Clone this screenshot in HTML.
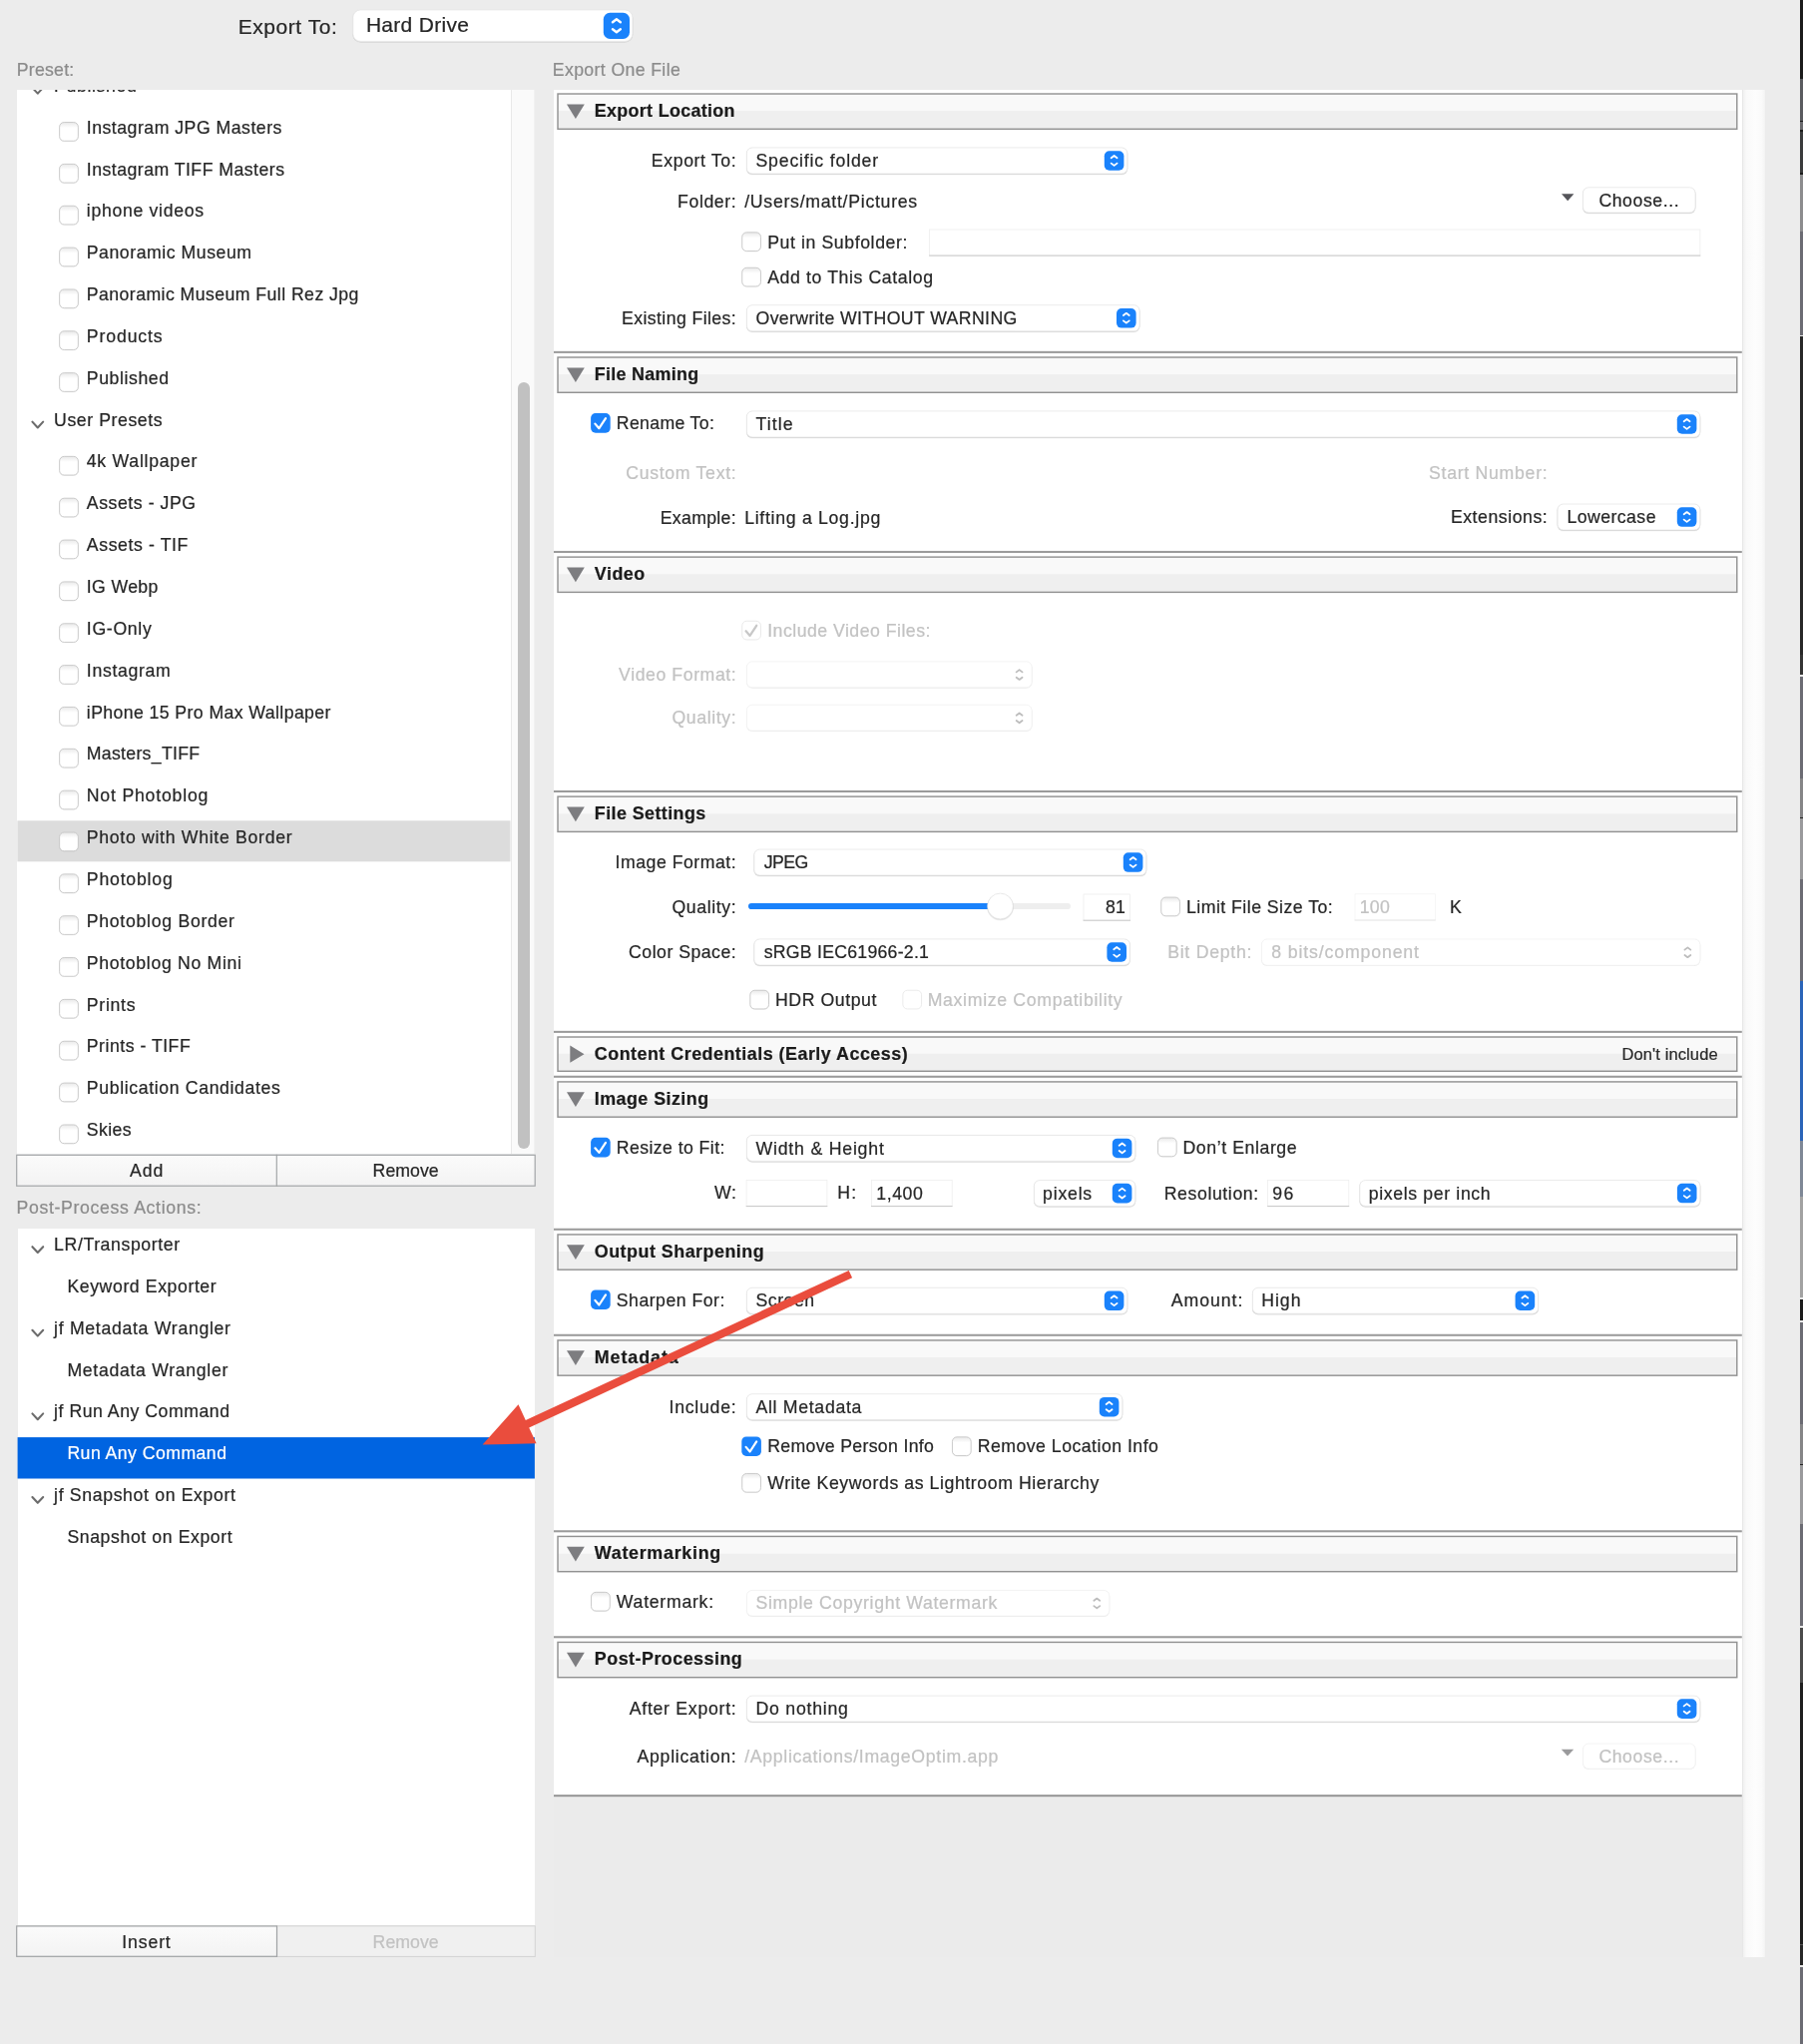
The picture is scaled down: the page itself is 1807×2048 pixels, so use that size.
<!DOCTYPE html>
<html lang="en"><head><meta charset="utf-8"><title>Export One File</title>
<style>
html,body{margin:0;padding:0;}
body{width:1807px;height:2048px;background:#ececec;position:relative;overflow:hidden;font-family:"Liberation Sans", sans-serif;-webkit-font-smoothing:antialiased;}
#r{position:absolute;left:0;top:0;width:1807px;height:2048px;overflow:hidden;transform:translateZ(0);will-change:transform;}
#r>div,#r>svg{position:absolute;box-sizing:border-box;}
div div{position:absolute;box-sizing:border-box;}
.t{margin:0;padding:0;-webkit-text-stroke:0.22px;}
</style></head><body><div id="r">
<svg width="0" height="0" style="left:0;top:0"><defs><linearGradient id="cbg" x1="0" y1="0" x2="0" y2="1"><stop offset="0" stop-color="#e9e9e9"/><stop offset="0.3" stop-color="#fff"/></linearGradient><linearGradient id="sbg" x1="0" y1="0" x2="0" y2="1"><stop offset="0" stop-color="#fbfbfb"/><stop offset="1" stop-color="#f3f3f3"/></linearGradient></defs></svg>
<div id="t0" class="t" style="top:12.00px;height:30px;line-height:30px;font-size:21px;color:#262626;letter-spacing:0.559px;white-space:pre;left:238.70px;">Export To:</div>
<svg style="left:351px;top:7px" width="286" height="38" viewBox="351 7 286 38"><rect x="353.2" y="9.8" width="281.3" height="33.1" rx="8.3" fill="rgba(0,0,0,0.045)"/><rect x="353.4" y="10.1" width="280.9" height="32.3" rx="8" fill="#d4d4d4"/><rect x="353.8" y="9.9" width="280.1" height="31.5" rx="7.6" fill="#fff" stroke="#e7e7e7" stroke-width="0.8"/><rect x="604.8" y="12.75" width="26.2" height="26.2" rx="6.5" fill="#1a82fb"/><path d="M613.96 22.17 L617.9 19.17 L621.84 22.17 M613.96 29.33 L617.9 32.33 L621.84 29.33" fill="none" stroke="#fff" stroke-width="2.41" stroke-linecap="round" stroke-linejoin="round"/></svg>
<div id="t1" class="t" style="top:10.00px;height:30px;line-height:30px;font-size:21px;color:#262626;letter-spacing:0.293px;white-space:pre;left:366.90px;">Hard Drive</div>
<div id="t2" class="t" style="top:55.00px;height:30px;line-height:30px;font-size:17.7px;color:#8b8b8b;letter-spacing:0.365px;white-space:pre;left:553.80px;">Export One File</div>
<div style="left:17.00px;top:89.50px;width:519.00px;height:1066.50px;background:#fff;"></div>
<div style="left:511.50px;top:89.50px;width:24.50px;height:1066.50px;background:#fafafa;border-left:1px solid #e9e9e9;border-right:1.5px solid #f1f1f1;"></div>
<div style="left:518.50px;top:383.00px;width:12.00px;height:768.00px;background:#c1c1c1;border-radius:6px;"></div>
<svg style="left:16px;top:821px" width="497" height="44" viewBox="16 821 497 44"><rect x="17.40" y="822.30" width="494.10" height="41.00" fill="#dcdcdc"/></svg>
<svg style="left:28px;top:83px" width="20" height="15" viewBox="28 83 20 15"><path d="M32.4 87.85 L37.8 93.65 L43.2 87.85" fill="none" stroke="#6c6c6c" stroke-width="2.1" stroke-linecap="round" stroke-linejoin="round"/></svg>
<div id="t3" class="t" style="top:71.00px;height:30px;line-height:30px;font-size:17.7px;color:#262626;letter-spacing:0.639px;white-space:pre;left:54.10px;">Published</div>
<svg style="left:57px;top:120px" width="24" height="24" viewBox="57 120 24 24"><rect x="59.2" y="122.6" width="19.6" height="19.5" rx="5" fill="rgba(0,0,0,0.05)"/><rect x="59.65" y="122.55" width="18.7" height="18.7" rx="4.6" fill="url(#cbg)" stroke="#c6c6c6" stroke-width="0.9"/></svg>
<div id="t4" class="t" style="top:113.00px;height:30px;line-height:30px;font-size:17.7px;color:#262626;letter-spacing:0.491px;white-space:pre;left:86.80px;">Instagram JPG Masters</div>
<svg style="left:57px;top:161px" width="24" height="25" viewBox="57 161 24 25"><rect x="59.2" y="164.45" width="19.6" height="19.5" rx="5" fill="rgba(0,0,0,0.05)"/><rect x="59.65" y="164.4" width="18.7" height="18.7" rx="4.6" fill="url(#cbg)" stroke="#c6c6c6" stroke-width="0.9"/></svg>
<div id="t5" class="t" style="top:155.00px;height:30px;line-height:30px;font-size:17.7px;color:#262626;letter-spacing:0.467px;white-space:pre;left:86.80px;">Instagram TIFF Masters</div>
<svg style="left:57px;top:203px" width="24" height="25" viewBox="57 203 24 25"><rect x="59.2" y="206.3" width="19.6" height="19.5" rx="5" fill="rgba(0,0,0,0.05)"/><rect x="59.65" y="206.25" width="18.7" height="18.7" rx="4.6" fill="url(#cbg)" stroke="#c6c6c6" stroke-width="0.9"/></svg>
<div id="t6" class="t" style="top:196.00px;height:30px;line-height:30px;font-size:17.7px;color:#262626;letter-spacing:0.677px;white-space:pre;left:86.80px;">iphone videos</div>
<svg style="left:57px;top:245px" width="24" height="25" viewBox="57 245 24 25"><rect x="59.2" y="248.15" width="19.6" height="19.5" rx="5" fill="rgba(0,0,0,0.05)"/><rect x="59.65" y="248.1" width="18.7" height="18.7" rx="4.6" fill="url(#cbg)" stroke="#c6c6c6" stroke-width="0.9"/></svg>
<div id="t7" class="t" style="top:238.00px;height:30px;line-height:30px;font-size:17.7px;color:#262626;letter-spacing:0.528px;white-space:pre;left:86.80px;">Panoramic Museum</div>
<svg style="left:57px;top:287px" width="24" height="25" viewBox="57 287 24 25"><rect x="59.2" y="290" width="19.6" height="19.5" rx="5" fill="rgba(0,0,0,0.05)"/><rect x="59.65" y="289.95" width="18.7" height="18.7" rx="4.6" fill="url(#cbg)" stroke="#c6c6c6" stroke-width="0.9"/></svg>
<div id="t8" class="t" style="top:280.00px;height:30px;line-height:30px;font-size:17.7px;color:#262626;letter-spacing:0.432px;white-space:pre;left:86.80px;">Panoramic Museum Full Rez Jpg</div>
<svg style="left:57px;top:329px" width="24" height="24" viewBox="57 329 24 24"><rect x="59.2" y="331.85" width="19.6" height="19.5" rx="5" fill="rgba(0,0,0,0.05)"/><rect x="59.65" y="331.8" width="18.7" height="18.7" rx="4.6" fill="url(#cbg)" stroke="#c6c6c6" stroke-width="0.9"/></svg>
<div id="t9" class="t" style="top:322.00px;height:30px;line-height:30px;font-size:17.7px;color:#262626;letter-spacing:0.870px;white-space:pre;left:86.80px;">Products</div>
<svg style="left:57px;top:371px" width="24" height="24" viewBox="57 371 24 24"><rect x="59.2" y="373.7" width="19.6" height="19.5" rx="5" fill="rgba(0,0,0,0.05)"/><rect x="59.65" y="373.65" width="18.7" height="18.7" rx="4.6" fill="url(#cbg)" stroke="#c6c6c6" stroke-width="0.9"/></svg>
<div id="t10" class="t" style="top:364.00px;height:30px;line-height:30px;font-size:17.7px;color:#262626;letter-spacing:0.577px;white-space:pre;left:86.80px;">Published</div>
<svg style="left:28px;top:418px" width="20" height="15" viewBox="28 418 20 15"><path d="M32.4 422.65 L37.8 428.45 L43.2 422.65" fill="none" stroke="#6c6c6c" stroke-width="2.1" stroke-linecap="round" stroke-linejoin="round"/></svg>
<div id="t11" class="t" style="top:406.00px;height:30px;line-height:30px;font-size:17.7px;color:#262626;letter-spacing:0.570px;white-space:pre;left:54.10px;">User Presets</div>
<svg style="left:57px;top:454px" width="24" height="25" viewBox="57 454 24 25"><rect x="59.2" y="457.4" width="19.6" height="19.5" rx="5" fill="rgba(0,0,0,0.05)"/><rect x="59.65" y="457.35" width="18.7" height="18.7" rx="4.6" fill="url(#cbg)" stroke="#c6c6c6" stroke-width="0.9"/></svg>
<div id="t12" class="t" style="top:447.00px;height:30px;line-height:30px;font-size:17.7px;color:#262626;letter-spacing:0.729px;white-space:pre;left:86.80px;">4k Wallpaper</div>
<svg style="left:57px;top:496px" width="24" height="25" viewBox="57 496 24 25"><rect x="59.2" y="499.25" width="19.6" height="19.5" rx="5" fill="rgba(0,0,0,0.05)"/><rect x="59.65" y="499.2" width="18.7" height="18.7" rx="4.6" fill="url(#cbg)" stroke="#c6c6c6" stroke-width="0.9"/></svg>
<div id="t13" class="t" style="top:489.00px;height:30px;line-height:30px;font-size:17.7px;color:#262626;letter-spacing:0.554px;white-space:pre;left:86.80px;">Assets - JPG</div>
<svg style="left:57px;top:538px" width="24" height="25" viewBox="57 538 24 25"><rect x="59.2" y="541.1" width="19.6" height="19.5" rx="5" fill="rgba(0,0,0,0.05)"/><rect x="59.65" y="541.05" width="18.7" height="18.7" rx="4.6" fill="url(#cbg)" stroke="#c6c6c6" stroke-width="0.9"/></svg>
<div id="t14" class="t" style="top:531.00px;height:30px;line-height:30px;font-size:17.7px;color:#262626;letter-spacing:0.599px;white-space:pre;left:86.80px;">Assets - TIF</div>
<svg style="left:57px;top:580px" width="24" height="25" viewBox="57 580 24 25"><rect x="59.2" y="582.95" width="19.6" height="19.5" rx="5" fill="rgba(0,0,0,0.05)"/><rect x="59.65" y="582.9" width="18.7" height="18.7" rx="4.6" fill="url(#cbg)" stroke="#c6c6c6" stroke-width="0.9"/></svg>
<div id="t15" class="t" style="top:573.00px;height:30px;line-height:30px;font-size:17.7px;color:#262626;letter-spacing:0.353px;white-space:pre;left:86.80px;">IG Webp</div>
<svg style="left:57px;top:622px" width="24" height="24" viewBox="57 622 24 24"><rect x="59.2" y="624.8" width="19.6" height="19.5" rx="5" fill="rgba(0,0,0,0.05)"/><rect x="59.65" y="624.75" width="18.7" height="18.7" rx="4.6" fill="url(#cbg)" stroke="#c6c6c6" stroke-width="0.9"/></svg>
<div id="t16" class="t" style="top:615.00px;height:30px;line-height:30px;font-size:17.7px;color:#262626;letter-spacing:0.677px;white-space:pre;left:86.80px;">IG-Only</div>
<svg style="left:57px;top:664px" width="24" height="24" viewBox="57 664 24 24"><rect x="59.2" y="666.65" width="19.6" height="19.5" rx="5" fill="rgba(0,0,0,0.05)"/><rect x="59.65" y="666.6" width="18.7" height="18.7" rx="4.6" fill="url(#cbg)" stroke="#c6c6c6" stroke-width="0.9"/></svg>
<div id="t17" class="t" style="top:657.00px;height:30px;line-height:30px;font-size:17.7px;color:#262626;letter-spacing:0.668px;white-space:pre;left:86.80px;">Instagram</div>
<svg style="left:57px;top:706px" width="24" height="24" viewBox="57 706 24 24"><rect x="59.2" y="708.5" width="19.6" height="19.5" rx="5" fill="rgba(0,0,0,0.05)"/><rect x="59.65" y="708.45" width="18.7" height="18.7" rx="4.6" fill="url(#cbg)" stroke="#c6c6c6" stroke-width="0.9"/></svg>
<div id="t18" class="t" style="top:699.00px;height:30px;line-height:30px;font-size:17.7px;color:#262626;letter-spacing:0.399px;white-space:pre;left:86.80px;">iPhone 15 Pro Max Wallpaper</div>
<svg style="left:57px;top:747px" width="24" height="25" viewBox="57 747 24 25"><rect x="59.2" y="750.35" width="19.6" height="19.5" rx="5" fill="rgba(0,0,0,0.05)"/><rect x="59.65" y="750.3" width="18.7" height="18.7" rx="4.6" fill="url(#cbg)" stroke="#c6c6c6" stroke-width="0.9"/></svg>
<div id="t19" class="t" style="top:740.00px;height:30px;line-height:30px;font-size:17.7px;color:#262626;letter-spacing:0.293px;white-space:pre;left:86.80px;">Masters_TIFF</div>
<svg style="left:57px;top:789px" width="24" height="25" viewBox="57 789 24 25"><rect x="59.2" y="792.2" width="19.6" height="19.5" rx="5" fill="rgba(0,0,0,0.05)"/><rect x="59.65" y="792.15" width="18.7" height="18.7" rx="4.6" fill="url(#cbg)" stroke="#c6c6c6" stroke-width="0.9"/></svg>
<div id="t20" class="t" style="top:782.00px;height:30px;line-height:30px;font-size:17.7px;color:#262626;letter-spacing:0.791px;white-space:pre;left:86.80px;">Not Photoblog</div>
<svg style="left:57px;top:831px" width="24" height="25" viewBox="57 831 24 25"><rect x="59.2" y="834.05" width="19.6" height="19.5" rx="5" fill="rgba(0,0,0,0.05)"/><rect x="59.65" y="834" width="18.7" height="18.7" rx="4.6" fill="url(#cbg)" stroke="#c6c6c6" stroke-width="0.9"/></svg>
<div id="t21" class="t" style="top:824.00px;height:30px;line-height:30px;font-size:17.7px;color:#262626;letter-spacing:0.685px;white-space:pre;left:86.80px;">Photo with White Border</div>
<svg style="left:57px;top:873px" width="24" height="24" viewBox="57 873 24 24"><rect x="59.2" y="875.9" width="19.6" height="19.5" rx="5" fill="rgba(0,0,0,0.05)"/><rect x="59.65" y="875.85" width="18.7" height="18.7" rx="4.6" fill="url(#cbg)" stroke="#c6c6c6" stroke-width="0.9"/></svg>
<div id="t22" class="t" style="top:866.00px;height:30px;line-height:30px;font-size:17.7px;color:#262626;letter-spacing:0.791px;white-space:pre;left:86.80px;">Photoblog</div>
<svg style="left:57px;top:915px" width="24" height="24" viewBox="57 915 24 24"><rect x="59.2" y="917.75" width="19.6" height="19.5" rx="5" fill="rgba(0,0,0,0.05)"/><rect x="59.65" y="917.7" width="18.7" height="18.7" rx="4.6" fill="url(#cbg)" stroke="#c6c6c6" stroke-width="0.9"/></svg>
<div id="t23" class="t" style="top:908.00px;height:30px;line-height:30px;font-size:17.7px;color:#262626;letter-spacing:0.702px;white-space:pre;left:86.80px;">Photoblog Border</div>
<svg style="left:57px;top:957px" width="24" height="24" viewBox="57 957 24 24"><rect x="59.2" y="959.6" width="19.6" height="19.5" rx="5" fill="rgba(0,0,0,0.05)"/><rect x="59.65" y="959.55" width="18.7" height="18.7" rx="4.6" fill="url(#cbg)" stroke="#c6c6c6" stroke-width="0.9"/></svg>
<div id="t24" class="t" style="top:950.00px;height:30px;line-height:30px;font-size:17.7px;color:#262626;letter-spacing:0.666px;white-space:pre;left:86.80px;">Photoblog No Mini</div>
<svg style="left:57px;top:998px" width="24" height="25" viewBox="57 998 24 25"><rect x="59.2" y="1001.45" width="19.6" height="19.5" rx="5" fill="rgba(0,0,0,0.05)"/><rect x="59.65" y="1001.4" width="18.7" height="18.7" rx="4.6" fill="url(#cbg)" stroke="#c6c6c6" stroke-width="0.9"/></svg>
<div id="t25" class="t" style="top:992.00px;height:30px;line-height:30px;font-size:17.7px;color:#262626;letter-spacing:0.696px;white-space:pre;left:86.80px;">Prints</div>
<svg style="left:57px;top:1040px" width="24" height="25" viewBox="57 1040 24 25"><rect x="59.2" y="1043.3" width="19.6" height="19.5" rx="5" fill="rgba(0,0,0,0.05)"/><rect x="59.65" y="1043.25" width="18.7" height="18.7" rx="4.6" fill="url(#cbg)" stroke="#c6c6c6" stroke-width="0.9"/></svg>
<div id="t26" class="t" style="top:1033.00px;height:30px;line-height:30px;font-size:17.7px;color:#262626;letter-spacing:0.497px;white-space:pre;left:86.80px;">Prints - TIFF</div>
<svg style="left:57px;top:1082px" width="24" height="25" viewBox="57 1082 24 25"><rect x="59.2" y="1085.15" width="19.6" height="19.5" rx="5" fill="rgba(0,0,0,0.05)"/><rect x="59.65" y="1085.1" width="18.7" height="18.7" rx="4.6" fill="url(#cbg)" stroke="#c6c6c6" stroke-width="0.9"/></svg>
<div id="t27" class="t" style="top:1075.00px;height:30px;line-height:30px;font-size:17.7px;color:#262626;letter-spacing:0.627px;white-space:pre;left:86.80px;">Publication Candidates</div>
<svg style="left:57px;top:1124px" width="24" height="25" viewBox="57 1124 24 25"><rect x="59.2" y="1127" width="19.6" height="19.5" rx="5" fill="rgba(0,0,0,0.05)"/><rect x="59.65" y="1126.95" width="18.7" height="18.7" rx="4.6" fill="url(#cbg)" stroke="#c6c6c6" stroke-width="0.9"/></svg>
<div id="t28" class="t" style="top:1117.00px;height:30px;line-height:30px;font-size:17.7px;color:#262626;letter-spacing:0.359px;white-space:pre;left:86.80px;">Skies</div>
<div style="left:0.00px;top:60.00px;width:545.00px;height:29.50px;background:#ececec;"></div>
<div id="t29" class="t" style="top:55.00px;height:30px;line-height:30px;font-size:17.7px;color:#8b8b8b;letter-spacing:0.259px;white-space:pre;left:16.70px;">Preset:</div>
<svg style="left:14px;top:1154px" width="525" height="37" viewBox="14 1154 525 37"><rect x="16.7" y="1157.3" width="519.5" height="30.9" rx="0" fill="url(#sbg)" stroke="#a3a6a8" stroke-width="1.2"/><path d="M277.3 1156.7 V1188.8" stroke="#a3a6a8" stroke-width="1.2"/></svg>
<div id="t30" class="t" style="top:1158.00px;height:30px;line-height:30px;font-size:17.7px;color:#262626;letter-spacing:0.958px;white-space:pre;left:130.00px;">Add</div>
<div id="t31" class="t" style="top:1158.00px;height:30px;line-height:30px;font-size:17.7px;color:#262626;letter-spacing:0.045px;white-space:pre;left:373.60px;">Remove</div>
<div id="t32" class="t" style="top:1195.00px;height:30px;line-height:30px;font-size:17.7px;color:#8b8b8b;letter-spacing:0.658px;white-space:pre;left:16.50px;">Post-Process Actions:</div>
<div style="left:17.50px;top:1230.50px;width:518.50px;height:698.50px;background:#fff;"></div>
<svg style="left:16px;top:1439px" width="521" height="44" viewBox="16 1439 521 44"><rect x="17.60" y="1440.10" width="518.30" height="41.40" fill="#0064e1"/></svg>
<svg style="left:28px;top:1245px" width="20" height="15" viewBox="28 1245 20 15"><path d="M32.4 1249.2 L37.8 1255 L43.2 1249.2" fill="none" stroke="#6c6c6c" stroke-width="2.1" stroke-linecap="round" stroke-linejoin="round"/></svg>
<div id="t33" class="t" style="top:1232.00px;height:30px;line-height:30px;font-size:17.7px;color:#262626;letter-spacing:0.593px;white-space:pre;left:54.10px;">LR/Transporter</div>
<div id="t34" class="t" style="top:1274.00px;height:30px;line-height:30px;font-size:17.7px;color:#262626;letter-spacing:0.581px;white-space:pre;left:67.40px;">Keyword Exporter</div>
<svg style="left:28px;top:1328px" width="20" height="15" viewBox="28 1328 20 15"><path d="M32.4 1332.8 L37.8 1338.6 L43.2 1332.8" fill="none" stroke="#6c6c6c" stroke-width="2.1" stroke-linecap="round" stroke-linejoin="round"/></svg>
<div id="t35" class="t" style="top:1316.00px;height:30px;line-height:30px;font-size:17.7px;color:#262626;letter-spacing:0.686px;white-space:pre;left:54.10px;">jf Metadata Wrangler</div>
<div id="t36" class="t" style="top:1358.00px;height:30px;line-height:30px;font-size:17.7px;color:#262626;letter-spacing:0.682px;white-space:pre;left:67.40px;">Metadata Wrangler</div>
<svg style="left:28px;top:1412px" width="20" height="15" viewBox="28 1412 20 15"><path d="M32.4 1416.4 L37.8 1422.2 L43.2 1416.4" fill="none" stroke="#6c6c6c" stroke-width="2.1" stroke-linecap="round" stroke-linejoin="round"/></svg>
<div id="t37" class="t" style="top:1399.00px;height:30px;line-height:30px;font-size:17.7px;color:#262626;letter-spacing:0.516px;white-space:pre;left:54.10px;">jf Run Any Command</div>
<div id="t38" class="t" style="top:1441.00px;height:30px;line-height:30px;font-size:17.7px;color:#fff;letter-spacing:0.445px;white-space:pre;left:67.40px;">Run Any Command</div>
<svg style="left:28px;top:1496px" width="20" height="14" viewBox="28 1496 20 14"><path d="M32.4 1500 L37.8 1505.8 L43.2 1500" fill="none" stroke="#6c6c6c" stroke-width="2.1" stroke-linecap="round" stroke-linejoin="round"/></svg>
<div id="t39" class="t" style="top:1483.00px;height:30px;line-height:30px;font-size:17.7px;color:#262626;letter-spacing:0.639px;white-space:pre;left:54.10px;">jf Snapshot on Export</div>
<div id="t40" class="t" style="top:1525.00px;height:30px;line-height:30px;font-size:17.7px;color:#262626;letter-spacing:0.584px;white-space:pre;left:67.40px;">Snapshot on Export</div>
<svg style="left:14px;top:1927px" width="525" height="36" viewBox="14 1927 525 36"><rect x="277.3" y="1929.8" width="259" height="30.6" rx="0" fill="#f0f0f0" stroke="#d2d2d2" stroke-width="1.0"/><rect x="16.7" y="1929.9" width="260.8" height="30.4" rx="0" fill="url(#sbg)" stroke="#9fa2a4" stroke-width="1.2"/></svg>
<div id="t41" class="t" style="top:1931.00px;height:30px;line-height:30px;font-size:17.7px;color:#262626;letter-spacing:0.850px;white-space:pre;left:122.30px;">Insert</div>
<div id="t42" class="t" style="top:1931.00px;height:30px;line-height:30px;font-size:17.7px;color:#c2c2c2;letter-spacing:0.045px;white-space:pre;left:373.60px;">Remove</div>
<div style="left:555.00px;top:90.00px;width:1190.60px;height:1710.00px;background:#fff;"></div>
<div style="left:555.00px;top:1800.00px;width:1192.20px;height:161.20px;background:#ebebeb;"></div>
<div style="left:1745.60px;top:90.00px;width:2.00px;height:1871.20px;background:#e7e7e7;"></div>
<div style="left:1747.20px;top:90.00px;width:21.90px;height:1871.20px;background:linear-gradient(90deg,#f0f0f0 0,#f9f9f9 15%,#fdfdfd 55%,#fafafa 85%,#f3f3f3 100%);"></div>
<svg style="left:554px;top:1797px" width="1193" height="5" viewBox="554 1797 1193 5"><rect x="555.00" y="1798.30" width="1190.80" height="1.90" fill="#8f8f8f"/></svg>
<svg style="left:553px;top:85px" width="1195" height="47" viewBox="553 85 1195 47"><rect x="559.0" y="94" width="1181.8" height="17.1" fill="#f9f9f9"/><rect x="559.0" y="111.1" width="1181.8" height="18.2" fill="#efefef"/><rect x="559.02" y="94.02" width="1181.76" height="35.26" fill="none" stroke="#929292" stroke-width="1.44"/><path d="M568 104.4 L585.8 104.4 L576.9 119.1 Z" fill="#7d7d80"/></svg>
<div id="t43" class="t" style="top:96.00px;height:30px;line-height:30px;font-size:17.9px;color:#1b1b1b;letter-spacing:0.316px;white-space:pre;font-weight:700;left:595.80px;">Export Location</div>
<div id="t44" class="t" style="top:146.00px;height:30px;line-height:30px;font-size:17.7px;color:#262626;letter-spacing:0.621px;white-space:pre;left:652.80px;">Export To:</div>
<svg style="left:746px;top:145px" width="387" height="33" viewBox="746 145 387 33"><rect x="747.8" y="147.8" width="382.6" height="27.7" rx="6.3" fill="rgba(0,0,0,0.045)"/><rect x="748" y="148.1" width="382.2" height="26.9" rx="6" fill="#d4d4d4"/><rect x="748.4" y="147.9" width="381.4" height="26.1" rx="5.6" fill="#fff" stroke="#e7e7e7" stroke-width="0.8"/><rect x="1106.8" y="151.2" width="19.6" height="19.6" rx="5" fill="#1a82fb"/><path d="M1113.65 158.25 L1116.6 156 L1119.55 158.25 M1113.65 163.6 L1116.6 165.85 L1119.55 163.6" fill="none" stroke="#fff" stroke-width="1.8" stroke-linecap="round" stroke-linejoin="round"/></svg>
<div id="t45" class="t" style="top:146.00px;height:30px;line-height:30px;font-size:17.7px;color:#262626;letter-spacing:0.822px;white-space:pre;left:757.50px;">Specific folder</div>
<div id="t46" class="t" style="top:187.00px;height:30px;line-height:30px;font-size:17.7px;color:#262626;letter-spacing:0.590px;white-space:pre;left:679.10px;">Folder:</div>
<div id="t47" class="t" style="top:187.00px;height:30px;line-height:30px;font-size:17.7px;color:#262626;letter-spacing:0.725px;white-space:pre;left:746.20px;">/Users/matt/Pictures</div>
<svg style="left:1563px;top:193px" width="17" height="13" viewBox="1563 193 17 13"><path d="M1565 194.3 L1577.4 194.3 L1571.2 201.2 Z" fill="#55555a"/></svg>
<svg style="left:1584px;top:185px" width="118" height="32" viewBox="1584 185 118 32"><rect x="1585.9" y="187.7" width="113.7" height="26.8" rx="6.3" fill="rgba(0,0,0,0.045)"/><rect x="1586.1" y="188" width="113.3" height="26" rx="6" fill="#d4d4d4"/><rect x="1586.5" y="187.8" width="112.5" height="25.2" rx="5.6" fill="#fff" stroke="#e7e7e7" stroke-width="0.8"/></svg>
<div id="t48" class="t" style="top:186.00px;height:30px;line-height:30px;font-size:17.7px;color:#262626;letter-spacing:0.560px;white-space:pre;left:1602.40px;">Choose...</div>
<svg style="left:741px;top:230px" width="24" height="24" viewBox="741 230 24 24"><rect x="743.3" y="232.9" width="19.6" height="19.5" rx="5" fill="rgba(0,0,0,0.05)"/><rect x="743.75" y="232.85" width="18.7" height="18.7" rx="4.6" fill="url(#cbg)" stroke="#c6c6c6" stroke-width="0.9"/></svg>
<div id="t49" class="t" style="top:228.00px;height:30px;line-height:30px;font-size:17.7px;color:#262626;letter-spacing:0.589px;white-space:pre;left:769.20px;">Put in Subfolder:</div>
<svg style="left:929px;top:227px" width="778" height="32" viewBox="929 227 778 32"><rect x="931.6" y="230" width="772.3" height="26.1" rx="0" fill="#fff" stroke="#eeeeee" stroke-width="0.8"/><path d="M931.2 256.1 H1704.3" stroke="#c2c2c2" stroke-width="0.9" fill="none"/></svg>
<svg style="left:741px;top:265px" width="24" height="25" viewBox="741 265 24 25"><rect x="743.3" y="268.3" width="19.6" height="19.5" rx="5" fill="rgba(0,0,0,0.05)"/><rect x="743.75" y="268.25" width="18.7" height="18.7" rx="4.6" fill="url(#cbg)" stroke="#c6c6c6" stroke-width="0.9"/></svg>
<div id="t50" class="t" style="top:263.00px;height:30px;line-height:30px;font-size:17.7px;color:#262626;letter-spacing:0.604px;white-space:pre;left:769.20px;">Add to This Catalog</div>
<div id="t51" class="t" style="top:304.00px;height:30px;line-height:30px;font-size:17.7px;color:#262626;letter-spacing:0.399px;white-space:pre;left:623.00px;">Existing Files:</div>
<svg style="left:746px;top:303px" width="399" height="33" viewBox="746 303 399 33"><rect x="747.8" y="305.6" width="394.8" height="27.7" rx="6.3" fill="rgba(0,0,0,0.045)"/><rect x="748" y="305.9" width="394.4" height="26.9" rx="6" fill="#d4d4d4"/><rect x="748.4" y="305.7" width="393.6" height="26.1" rx="5.6" fill="#fff" stroke="#e7e7e7" stroke-width="0.8"/><rect x="1119" y="309" width="19.6" height="19.6" rx="5" fill="#1a82fb"/><path d="M1125.85 316.05 L1128.8 313.8 L1131.75 316.05 M1125.85 321.4 L1128.8 323.65 L1131.75 321.4" fill="none" stroke="#fff" stroke-width="1.8" stroke-linecap="round" stroke-linejoin="round"/></svg>
<div id="t52" class="t" style="top:304.00px;height:30px;line-height:30px;font-size:17.7px;color:#262626;letter-spacing:0.386px;white-space:pre;left:757.50px;">Overwrite WITHOUT WARNING</div>
<svg style="left:553px;top:349px" width="1195" height="47" viewBox="553 349 1195 47"><rect x="555" y="351.85" width="1190.8" height="2.05" fill="#9b9b9b"/><rect x="559.0" y="358" width="1181.8" height="17.1" fill="#f9f9f9"/><rect x="559.0" y="375.1" width="1181.8" height="18.2" fill="#efefef"/><rect x="559.02" y="358.02" width="1181.76" height="35.26" fill="none" stroke="#929292" stroke-width="1.44"/><path d="M568 368.4 L585.8 368.4 L576.9 383.1 Z" fill="#7d7d80"/></svg>
<div id="t53" class="t" style="top:360.00px;height:30px;line-height:30px;font-size:17.9px;color:#1b1b1b;letter-spacing:0.289px;white-space:pre;font-weight:700;left:595.80px;">File Naming</div>
<svg style="left:590px;top:412px" width="24" height="24" viewBox="590 412 24 24"><rect x="592.1" y="414.1" width="19.6" height="19.6" rx="4.7" fill="#1a82fb"/><path d="M596.4 424.6 L600.4 429.2 L607 419.1" fill="none" stroke="#fff" stroke-width="2.2" stroke-linecap="round" stroke-linejoin="round"/></svg>
<div id="t54" class="t" style="top:409.00px;height:30px;line-height:30px;font-size:17.7px;color:#262626;letter-spacing:0.328px;white-space:pre;left:617.80px;">Rename To:</div>
<svg style="left:746px;top:409px" width="961" height="33" viewBox="746 409 961 33"><rect x="747.8" y="411.8" width="956.6" height="27.7" rx="6.3" fill="rgba(0,0,0,0.045)"/><rect x="748" y="412.1" width="956.2" height="26.9" rx="6" fill="#d4d4d4"/><rect x="748.4" y="411.9" width="955.4" height="26.1" rx="5.6" fill="#fff" stroke="#e7e7e7" stroke-width="0.8"/><rect x="1680.8" y="415.2" width="19.6" height="19.6" rx="5" fill="#1a82fb"/><path d="M1687.65 422.25 L1690.6 420 L1693.55 422.25 M1687.65 427.6 L1690.6 429.85 L1693.55 427.6" fill="none" stroke="#fff" stroke-width="1.8" stroke-linecap="round" stroke-linejoin="round"/></svg>
<div id="t55" class="t" style="top:410.00px;height:30px;line-height:30px;font-size:17.7px;color:#262626;letter-spacing:1.084px;white-space:pre;left:757.50px;">Title</div>
<div id="t56" class="t" style="top:459.00px;height:30px;line-height:30px;font-size:17.7px;color:#c2c2c2;letter-spacing:0.692px;white-space:pre;left:627.20px;">Custom Text:</div>
<div id="t57" class="t" style="top:459.00px;height:30px;line-height:30px;font-size:17.7px;color:#c2c2c2;letter-spacing:0.717px;white-space:pre;left:1432.00px;">Start Number:</div>
<div id="t58" class="t" style="top:504.00px;height:30px;line-height:30px;font-size:17.7px;color:#262626;letter-spacing:0.324px;white-space:pre;left:661.70px;">Example:</div>
<div id="t59" class="t" style="top:504.00px;height:30px;line-height:30px;font-size:17.7px;color:#262626;letter-spacing:0.700px;white-space:pre;left:746.20px;">Lifting a Log.jpg</div>
<div id="t60" class="t" style="top:503.00px;height:30px;line-height:30px;font-size:17.7px;color:#262626;letter-spacing:0.536px;white-space:pre;left:1453.90px;">Extensions:</div>
<svg style="left:1558px;top:502px" width="149" height="33" viewBox="1558 502 149 33"><rect x="1560.5" y="504.9" width="143.9" height="27.6" rx="6.3" fill="rgba(0,0,0,0.045)"/><rect x="1560.7" y="505.2" width="143.5" height="26.8" rx="6" fill="#d4d4d4"/><rect x="1561.1" y="505" width="142.7" height="26" rx="5.6" fill="#fff" stroke="#e7e7e7" stroke-width="0.8"/><rect x="1680.8" y="508.25" width="19.6" height="19.6" rx="5" fill="#1a82fb"/><path d="M1687.65 515.3 L1690.6 513.05 L1693.55 515.3 M1687.65 520.65 L1690.6 522.9 L1693.55 520.65" fill="none" stroke="#fff" stroke-width="1.8" stroke-linecap="round" stroke-linejoin="round"/></svg>
<div id="t61" class="t" style="top:503.00px;height:30px;line-height:30px;font-size:17.7px;color:#262626;letter-spacing:0.444px;white-space:pre;left:1570.40px;">Lowercase</div>
<svg style="left:553px;top:549px" width="1195" height="48" viewBox="553 549 1195 48"><rect x="555" y="551.95" width="1190.8" height="2.05" fill="#9b9b9b"/><rect x="559.0" y="558.1" width="1181.8" height="17.1" fill="#f9f9f9"/><rect x="559.0" y="575.2" width="1181.8" height="18.2" fill="#efefef"/><rect x="559.02" y="558.12" width="1181.76" height="35.26" fill="none" stroke="#929292" stroke-width="1.44"/><path d="M568 568.5 L585.8 568.5 L576.9 583.2 Z" fill="#7d7d80"/></svg>
<div id="t62" class="t" style="top:560.00px;height:30px;line-height:30px;font-size:17.9px;color:#1b1b1b;letter-spacing:0.502px;white-space:pre;font-weight:700;left:595.80px;">Video</div>
<svg style="left:741px;top:619px" width="24" height="25" viewBox="741 619 24 25"><rect x="743.75" y="622.25" width="18.7" height="18.7" rx="4.6" fill="#fff" stroke="#e7e7e7" stroke-width="0.9"/><path d="M747.6 632.3 L751.6 636.9 L758.2 626.8" fill="none" stroke="#c8c8c8" stroke-width="2.3" stroke-linecap="round" stroke-linejoin="round"/></svg>
<div id="t63" class="t" style="top:617.00px;height:30px;line-height:30px;font-size:17.7px;color:#c2c2c2;letter-spacing:0.482px;white-space:pre;left:769.20px;">Include Video Files:</div>
<div id="t64" class="t" style="top:661.00px;height:30px;line-height:30px;font-size:17.7px;color:#c2c2c2;letter-spacing:0.570px;white-space:pre;left:620.10px;">Video Format:</div>
<svg style="left:746px;top:660px" width="291" height="33" viewBox="746 660 291 33"><rect x="748" y="663" width="286.5" height="26.7" rx="6" fill="#ececec"/><rect x="748.4" y="662.8" width="285.7" height="26" rx="5.6" fill="#fff" stroke="#f1f1f1" stroke-width="0.8"/><path d="M1018.65 673.35 L1021.6 671.1 L1024.55 673.35 M1018.65 678.7 L1021.6 680.95 L1024.55 678.7" fill="none" stroke="#bdbdbd" stroke-width="1.8" stroke-linecap="round" stroke-linejoin="round"/></svg>
<div id="t65" class="t" style="top:704.00px;height:30px;line-height:30px;font-size:17.7px;color:#c2c2c2;letter-spacing:0.619px;white-space:pre;left:673.40px;">Quality:</div>
<svg style="left:746px;top:703px" width="291" height="33" viewBox="746 703 291 33"><rect x="748" y="706.4" width="286.5" height="26.6" rx="6" fill="#ececec"/><rect x="748.4" y="706.2" width="285.7" height="25.9" rx="5.6" fill="#fff" stroke="#f1f1f1" stroke-width="0.8"/><path d="M1018.65 716.7 L1021.6 714.45 L1024.55 716.7 M1018.65 722.05 L1021.6 724.3 L1024.55 722.05" fill="none" stroke="#bdbdbd" stroke-width="1.8" stroke-linecap="round" stroke-linejoin="round"/></svg>
<svg style="left:553px;top:789px" width="1195" height="48" viewBox="553 789 1195 48"><rect x="555" y="791.95" width="1190.8" height="2.05" fill="#9b9b9b"/><rect x="559.0" y="798.1" width="1181.8" height="17.1" fill="#f9f9f9"/><rect x="559.0" y="815.2" width="1181.8" height="18.2" fill="#efefef"/><rect x="559.02" y="798.12" width="1181.76" height="35.26" fill="none" stroke="#929292" stroke-width="1.44"/><path d="M568 808.5 L585.8 808.5 L576.9 823.2 Z" fill="#7d7d80"/></svg>
<div id="t66" class="t" style="top:800.00px;height:30px;line-height:30px;font-size:17.9px;color:#1b1b1b;letter-spacing:0.419px;white-space:pre;font-weight:700;left:595.80px;">File Settings</div>
<div id="t67" class="t" style="top:849.00px;height:30px;line-height:30px;font-size:17.7px;color:#262626;letter-spacing:0.507px;white-space:pre;left:616.60px;">Image Format:</div>
<svg style="left:753px;top:848px" width="399" height="33" viewBox="753 848 399 33"><rect x="755.3" y="850.9" width="394.1" height="27.6" rx="6.3" fill="rgba(0,0,0,0.045)"/><rect x="755.5" y="851.2" width="393.7" height="26.8" rx="6" fill="#d4d4d4"/><rect x="755.9" y="851" width="392.9" height="26" rx="5.6" fill="#fff" stroke="#e7e7e7" stroke-width="0.8"/><rect x="1125.8" y="854.25" width="19.6" height="19.6" rx="5" fill="#1a82fb"/><path d="M1132.65 861.3 L1135.6 859.05 L1138.55 861.3 M1132.65 866.65 L1135.6 868.9 L1138.55 866.65" fill="none" stroke="#fff" stroke-width="1.8" stroke-linecap="round" stroke-linejoin="round"/></svg>
<div id="t68" class="t" style="top:849.00px;height:30px;line-height:30px;font-size:17.7px;color:#262626;letter-spacing:-0.568px;white-space:pre;left:765.70px;">JPEG</div>
<div id="t69" class="t" style="top:894.00px;height:30px;line-height:30px;font-size:17.7px;color:#262626;letter-spacing:0.619px;white-space:pre;left:673.40px;">Quality:</div>
<svg style="left:746px;top:891px" width="332" height="35" viewBox="746 891 332 35"><rect x="750" y="904.9" width="323" height="6.2" rx="3.1" fill="#eeeeee"/><rect x="750" y="904.9" width="253" height="6.2" rx="3.1" fill="#1a82fb"/><circle cx="1002.5" cy="908.9" r="13.5" fill="rgba(0,0,0,0.05)"/><circle cx="1002.5" cy="908.5" r="13.3" fill="rgba(0,0,0,0.06)"/><circle cx="1002.5" cy="908" r="12.9" fill="#fff" stroke="#dcdcdc" stroke-width="0.6"/></svg>
<svg style="left:1083px;top:893px" width="52" height="32" viewBox="1083 893 52 32"><rect x="1086" y="896" width="46.6" height="26.2" rx="0" fill="#fff" stroke="#eeeeee" stroke-width="0.8"/><path d="M1085.6 922.2 H1133" stroke="#c2c2c2" stroke-width="0.9" fill="none"/></svg>
<div id="t70" class="t" style="top:894.00px;height:30px;line-height:30px;font-size:17.7px;color:#262626;letter-spacing:0.312px;white-space:pre;left:1107.90px;">81</div>
<svg style="left:1161px;top:896px" width="24" height="25" viewBox="1161 896 24 25"><rect x="1163.3" y="899.1" width="19.6" height="19.5" rx="5" fill="rgba(0,0,0,0.05)"/><rect x="1163.75" y="899.05" width="18.7" height="18.7" rx="4.6" fill="url(#cbg)" stroke="#c6c6c6" stroke-width="0.9"/></svg>
<div id="t71" class="t" style="top:894.00px;height:30px;line-height:30px;font-size:17.7px;color:#262626;letter-spacing:0.468px;white-space:pre;left:1189.00px;">Limit File Size To:</div>
<svg style="left:1355px;top:893px" width="86" height="32" viewBox="1355 893 86 32"><rect x="1358" y="895.8" width="80.4" height="26.2" rx="0" fill="#fff" stroke="#f4f4f4" stroke-width="0.8"/><path d="M1357.6 922 H1438.8" stroke="#e3e3e3" stroke-width="0.9" fill="none"/></svg>
<div id="t72" class="t" style="top:894.00px;height:30px;line-height:30px;font-size:17.7px;color:#c2c2c2;letter-spacing:0.342px;white-space:pre;left:1362.70px;">100</div>
<div id="t73" class="t" style="top:894.00px;height:30px;line-height:30px;font-size:17.7px;color:#262626;letter-spacing:0.586px;white-space:pre;left:1452.90px;">K</div>
<div id="t74" class="t" style="top:939.00px;height:30px;line-height:30px;font-size:17.7px;color:#262626;letter-spacing:0.486px;white-space:pre;left:630.10px;">Color Space:</div>
<svg style="left:753px;top:938px" width="382" height="33" viewBox="753 938 382 33"><rect x="755.3" y="940.8" width="377.7" height="27.7" rx="6.3" fill="rgba(0,0,0,0.045)"/><rect x="755.5" y="941.1" width="377.3" height="26.9" rx="6" fill="#d4d4d4"/><rect x="755.9" y="940.9" width="376.5" height="26.1" rx="5.6" fill="#fff" stroke="#e7e7e7" stroke-width="0.8"/><rect x="1109.4" y="944.2" width="19.6" height="19.6" rx="5" fill="#1a82fb"/><path d="M1116.25 951.25 L1119.2 949 L1122.15 951.25 M1116.25 956.6 L1119.2 958.85 L1122.15 956.6" fill="none" stroke="#fff" stroke-width="1.8" stroke-linecap="round" stroke-linejoin="round"/></svg>
<div id="t75" class="t" style="top:939.00px;height:30px;line-height:30px;font-size:17.7px;color:#262626;letter-spacing:0.248px;white-space:pre;left:765.70px;">sRGB IEC61966-2.1</div>
<div id="t76" class="t" style="top:939.00px;height:30px;line-height:30px;font-size:17.7px;color:#c2c2c2;letter-spacing:0.725px;white-space:pre;left:1170.20px;">Bit Depth:</div>
<svg style="left:1262px;top:938px" width="445" height="33" viewBox="1262 938 445 33"><rect x="1264" y="941.1" width="440.3" height="27" rx="6" fill="#ececec"/><rect x="1264.4" y="940.9" width="439.5" height="26.3" rx="5.6" fill="#fff" stroke="#f1f1f1" stroke-width="0.8"/><path d="M1688.45 951.6 L1691.4 949.35 L1694.35 951.6 M1688.45 956.95 L1691.4 959.2 L1694.35 956.95" fill="none" stroke="#bdbdbd" stroke-width="1.8" stroke-linecap="round" stroke-linejoin="round"/></svg>
<div id="t77" class="t" style="top:939.00px;height:30px;line-height:30px;font-size:17.7px;color:#c2c2c2;letter-spacing:0.873px;white-space:pre;left:1274.20px;">8 bits/component</div>
<svg style="left:749px;top:989px" width="24" height="25" viewBox="749 989 24 25"><rect x="751.4" y="992.3" width="19.6" height="19.5" rx="5" fill="rgba(0,0,0,0.05)"/><rect x="751.85" y="992.25" width="18.7" height="18.7" rx="4.6" fill="url(#cbg)" stroke="#c6c6c6" stroke-width="0.9"/></svg>
<div id="t78" class="t" style="top:987.00px;height:30px;line-height:30px;font-size:17.7px;color:#262626;letter-spacing:0.562px;white-space:pre;left:777.00px;">HDR Output</div>
<svg style="left:902px;top:989px" width="24" height="25" viewBox="902 989 24 25"><rect x="904.85" y="992.25" width="18.7" height="18.7" rx="4.6" fill="#fff" stroke="#e9e9e9" stroke-width="0.9"/></svg>
<div id="t79" class="t" style="top:987.00px;height:30px;line-height:30px;font-size:17.7px;color:#c2c2c2;letter-spacing:0.673px;white-space:pre;left:929.70px;">Maximize Compatibility</div>
<svg style="left:553px;top:1030px" width="1195" height="46" viewBox="553 1030 1195 46"><rect x="555" y="1032.85" width="1190.8" height="2.05" fill="#9b9b9b"/><rect x="559.0" y="1039" width="1181.8" height="16.61" fill="#f9f9f9"/><rect x="559.0" y="1055.61" width="1181.8" height="17.69" fill="#efefef"/><rect x="559.02" y="1039.02" width="1181.76" height="34.26" fill="none" stroke="#929292" stroke-width="1.44"/><path d="M571.3 1047.45 L585.5 1056.15 L571.3 1064.85 Z" fill="#7d7d80"/></svg>
<div id="t80" class="t" style="top:1041.00px;height:30px;line-height:30px;font-size:17.9px;color:#1b1b1b;letter-spacing:0.491px;white-space:pre;font-weight:700;left:595.80px;">Content Credentials (Early Access)</div>
<div id="t81" class="t" style="top:1041.00px;height:30px;line-height:30px;font-size:16.5px;color:#2a2a2a;letter-spacing:0.102px;white-space:pre;left:1625.50px;">Don't include</div>
<svg style="left:553px;top:1075px" width="1195" height="47" viewBox="553 1075 1195 47"><rect x="555" y="1077.75" width="1190.8" height="2.05" fill="#9b9b9b"/><rect x="559.0" y="1083.9" width="1181.8" height="17.1" fill="#f9f9f9"/><rect x="559.0" y="1101" width="1181.8" height="18.2" fill="#efefef"/><rect x="559.02" y="1083.92" width="1181.76" height="35.26" fill="none" stroke="#929292" stroke-width="1.44"/><path d="M568 1094.3 L585.8 1094.3 L576.9 1109 Z" fill="#7d7d80"/></svg>
<div id="t82" class="t" style="top:1086.00px;height:30px;line-height:30px;font-size:17.9px;color:#1b1b1b;letter-spacing:0.449px;white-space:pre;font-weight:700;left:595.80px;">Image Sizing</div>
<svg style="left:590px;top:1137px" width="24" height="25" viewBox="590 1137 24 25"><rect x="592.1" y="1139.8" width="19.6" height="19.6" rx="4.7" fill="#1a82fb"/><path d="M596.4 1150.3 L600.4 1154.9 L607 1144.8" fill="none" stroke="#fff" stroke-width="2.2" stroke-linecap="round" stroke-linejoin="round"/></svg>
<div id="t83" class="t" style="top:1135.00px;height:30px;line-height:30px;font-size:17.7px;color:#262626;letter-spacing:0.414px;white-space:pre;left:617.80px;">Resize to Fit:</div>
<svg style="left:746px;top:1135px" width="395" height="32" viewBox="746 1135 395 32"><rect x="747.8" y="1137.3" width="390.6" height="27.6" rx="6.3" fill="rgba(0,0,0,0.045)"/><rect x="748" y="1137.6" width="390.2" height="26.8" rx="6" fill="#d4d4d4"/><rect x="748.4" y="1137.4" width="389.4" height="26" rx="5.6" fill="#fff" stroke="#e7e7e7" stroke-width="0.8"/><rect x="1114.8" y="1140.65" width="19.6" height="19.6" rx="5" fill="#1a82fb"/><path d="M1121.65 1147.7 L1124.6 1145.45 L1127.55 1147.7 M1121.65 1153.05 L1124.6 1155.3 L1127.55 1153.05" fill="none" stroke="#fff" stroke-width="1.8" stroke-linecap="round" stroke-linejoin="round"/></svg>
<div id="t84" class="t" style="top:1136.00px;height:30px;line-height:30px;font-size:17.7px;color:#262626;letter-spacing:0.795px;white-space:pre;left:757.50px;">Width &amp; Height</div>
<svg style="left:1158px;top:1137px" width="24" height="25" viewBox="1158 1137 24 25"><rect x="1160" y="1140.1" width="19.6" height="19.5" rx="5" fill="rgba(0,0,0,0.05)"/><rect x="1160.45" y="1140.05" width="18.7" height="18.7" rx="4.6" fill="url(#cbg)" stroke="#c6c6c6" stroke-width="0.9"/></svg>
<div id="t85" class="t" style="top:1135.00px;height:30px;line-height:30px;font-size:17.7px;color:#262626;letter-spacing:0.577px;white-space:pre;left:1185.50px;">Don’t Enlarge</div>
<div id="t86" class="t" style="top:1180.00px;height:30px;line-height:30px;font-size:17.7px;color:#262626;letter-spacing:0.603px;white-space:pre;left:716.00px;">W:</div>
<svg style="left:745px;top:1180px" width="87" height="31" viewBox="745 1180 87 31"><rect x="748.1" y="1182.6" width="80.8" height="26" rx="0" fill="#fff" stroke="#eeeeee" stroke-width="0.8"/><path d="M747.7 1208.6 H829.3" stroke="#c2c2c2" stroke-width="0.9" fill="none"/></svg>
<div id="t87" class="t" style="top:1180.00px;height:30px;line-height:30px;font-size:17.7px;color:#262626;letter-spacing:1.213px;white-space:pre;left:839.20px;">H:</div>
<svg style="left:871px;top:1180px" width="86" height="31" viewBox="871 1180 86 31"><rect x="873.4" y="1182.6" width="80.8" height="26" rx="0" fill="#fff" stroke="#eeeeee" stroke-width="0.8"/><path d="M873 1208.6 H954.6" stroke="#c2c2c2" stroke-width="0.9" fill="none"/></svg>
<div id="t88" class="t" style="top:1181.00px;height:30px;line-height:30px;font-size:17.7px;color:#262626;letter-spacing:0.609px;white-space:pre;left:878.20px;">1,400</div>
<svg style="left:1034px;top:1180px" width="107" height="32" viewBox="1034 1180 107 32"><rect x="1035.8" y="1182.5" width="102.6" height="27.6" rx="6.3" fill="rgba(0,0,0,0.045)"/><rect x="1036" y="1182.8" width="102.2" height="26.8" rx="6" fill="#d4d4d4"/><rect x="1036.4" y="1182.6" width="101.4" height="26" rx="5.6" fill="#fff" stroke="#e7e7e7" stroke-width="0.8"/><rect x="1114.8" y="1185.85" width="19.6" height="19.6" rx="5" fill="#1a82fb"/><path d="M1121.65 1192.9 L1124.6 1190.65 L1127.55 1192.9 M1121.65 1198.25 L1124.6 1200.5 L1127.55 1198.25" fill="none" stroke="#fff" stroke-width="1.8" stroke-linecap="round" stroke-linejoin="round"/></svg>
<div id="t89" class="t" style="top:1181.00px;height:30px;line-height:30px;font-size:17.7px;color:#262626;letter-spacing:0.773px;white-space:pre;left:1045.10px;">pixels</div>
<div id="t90" class="t" style="top:1181.00px;height:30px;line-height:30px;font-size:17.7px;color:#262626;letter-spacing:0.600px;white-space:pre;left:1166.70px;">Resolution:</div>
<svg style="left:1268px;top:1180px" width="87" height="31" viewBox="1268 1180 87 31"><rect x="1270.6" y="1182.6" width="81.2" height="26" rx="0" fill="#fff" stroke="#eeeeee" stroke-width="0.8"/><path d="M1270.2 1208.6 H1352.2" stroke="#c2c2c2" stroke-width="0.9" fill="none"/></svg>
<div id="t91" class="t" style="top:1181.00px;height:30px;line-height:30px;font-size:17.7px;color:#262626;letter-spacing:1.400px;white-space:pre;left:1275.20px;">96</div>
<svg style="left:1360px;top:1180px" width="347" height="32" viewBox="1360 1180 347 32"><rect x="1362.2" y="1182.5" width="342.3" height="27.4" rx="6.3" fill="rgba(0,0,0,0.045)"/><rect x="1362.4" y="1182.8" width="341.9" height="26.6" rx="6" fill="#d4d4d4"/><rect x="1362.8" y="1182.6" width="341.1" height="25.8" rx="5.6" fill="#fff" stroke="#e7e7e7" stroke-width="0.8"/><rect x="1680.9" y="1185.75" width="19.6" height="19.6" rx="5" fill="#1a82fb"/><path d="M1687.75 1192.8 L1690.7 1190.55 L1693.65 1192.8 M1687.75 1198.15 L1690.7 1200.4 L1693.65 1198.15" fill="none" stroke="#fff" stroke-width="1.8" stroke-linecap="round" stroke-linejoin="round"/></svg>
<div id="t92" class="t" style="top:1181.00px;height:30px;line-height:30px;font-size:17.7px;color:#262626;letter-spacing:0.638px;white-space:pre;left:1371.70px;">pixels per inch</div>
<svg style="left:553px;top:1228px" width="1195" height="47" viewBox="553 1228 1195 47"><rect x="555" y="1230.75" width="1190.8" height="2.05" fill="#9b9b9b"/><rect x="559.0" y="1236.9" width="1181.8" height="17.1" fill="#f9f9f9"/><rect x="559.0" y="1254" width="1181.8" height="18.2" fill="#efefef"/><rect x="559.02" y="1236.92" width="1181.76" height="35.26" fill="none" stroke="#929292" stroke-width="1.44"/><path d="M568 1247.3 L585.8 1247.3 L576.9 1262 Z" fill="#7d7d80"/></svg>
<div id="t93" class="t" style="top:1239.00px;height:30px;line-height:30px;font-size:17.9px;color:#1b1b1b;letter-spacing:0.488px;white-space:pre;font-weight:700;left:595.80px;">Output Sharpening</div>
<svg style="left:590px;top:1290px" width="24" height="24" viewBox="590 1290 24 24"><rect x="592.1" y="1292.4" width="19.6" height="19.6" rx="4.7" fill="#1a82fb"/><path d="M596.4 1302.9 L600.4 1307.5 L607 1297.4" fill="none" stroke="#fff" stroke-width="2.2" stroke-linecap="round" stroke-linejoin="round"/></svg>
<div id="t94" class="t" style="top:1288.00px;height:30px;line-height:30px;font-size:17.7px;color:#262626;letter-spacing:0.488px;white-space:pre;left:617.80px;">Sharpen For:</div>
<svg style="left:746px;top:1287px" width="387" height="33" viewBox="746 1287 387 33"><rect x="747.8" y="1290.1" width="382.6" height="27.7" rx="6.3" fill="rgba(0,0,0,0.045)"/><rect x="748" y="1290.4" width="382.2" height="26.9" rx="6" fill="#d4d4d4"/><rect x="748.4" y="1290.2" width="381.4" height="26.1" rx="5.6" fill="#fff" stroke="#e7e7e7" stroke-width="0.8"/><rect x="1106.8" y="1293.5" width="19.6" height="19.6" rx="5" fill="#1a82fb"/><path d="M1113.65 1300.55 L1116.6 1298.3 L1119.55 1300.55 M1113.65 1305.9 L1116.6 1308.15 L1119.55 1305.9" fill="none" stroke="#fff" stroke-width="1.8" stroke-linecap="round" stroke-linejoin="round"/></svg>
<div id="t95" class="t" style="top:1288.00px;height:30px;line-height:30px;font-size:17.7px;color:#262626;letter-spacing:0.531px;white-space:pre;left:757.50px;">Screen</div>
<div id="t96" class="t" style="top:1288.00px;height:30px;line-height:30px;font-size:17.7px;color:#262626;letter-spacing:0.971px;white-space:pre;left:1173.70px;">Amount:</div>
<svg style="left:1253px;top:1287px" width="291" height="33" viewBox="1253 1287 291 33"><rect x="1254.8" y="1290.1" width="287.4" height="27.6" rx="6.3" fill="rgba(0,0,0,0.045)"/><rect x="1255" y="1290.4" width="287" height="26.8" rx="6" fill="#d4d4d4"/><rect x="1255.4" y="1290.2" width="286.2" height="26" rx="5.6" fill="#fff" stroke="#e7e7e7" stroke-width="0.8"/><rect x="1518.6" y="1293.45" width="19.6" height="19.6" rx="5" fill="#1a82fb"/><path d="M1525.45 1300.5 L1528.4 1298.25 L1531.35 1300.5 M1525.45 1305.85 L1528.4 1308.1 L1531.35 1305.85" fill="none" stroke="#fff" stroke-width="1.8" stroke-linecap="round" stroke-linejoin="round"/></svg>
<div id="t97" class="t" style="top:1288.00px;height:30px;line-height:30px;font-size:17.7px;color:#262626;letter-spacing:0.970px;white-space:pre;left:1264.20px;">High</div>
<svg style="left:553px;top:1334px" width="1195" height="47" viewBox="553 1334 1195 47"><rect x="555" y="1336.75" width="1190.8" height="2.05" fill="#9b9b9b"/><rect x="559.0" y="1342.9" width="1181.8" height="17.1" fill="#f9f9f9"/><rect x="559.0" y="1360" width="1181.8" height="18.2" fill="#efefef"/><rect x="559.02" y="1342.92" width="1181.76" height="35.26" fill="none" stroke="#929292" stroke-width="1.44"/><path d="M568 1353.3 L585.8 1353.3 L576.9 1368 Z" fill="#7d7d80"/></svg>
<div id="t98" class="t" style="top:1345.00px;height:30px;line-height:30px;font-size:17.9px;color:#1b1b1b;letter-spacing:0.908px;white-space:pre;font-weight:700;left:595.80px;">Metadata</div>
<div id="t99" class="t" style="top:1395.00px;height:30px;line-height:30px;font-size:17.7px;color:#262626;letter-spacing:0.750px;white-space:pre;left:670.50px;">Include:</div>
<svg style="left:746px;top:1394px" width="382" height="32" viewBox="746 1394 382 32"><rect x="747.8" y="1396.6" width="377.6" height="27.5" rx="6.3" fill="rgba(0,0,0,0.045)"/><rect x="748" y="1396.9" width="377.2" height="26.7" rx="6" fill="#d4d4d4"/><rect x="748.4" y="1396.7" width="376.4" height="25.9" rx="5.6" fill="#fff" stroke="#e7e7e7" stroke-width="0.8"/><rect x="1101.8" y="1399.9" width="19.6" height="19.6" rx="5" fill="#1a82fb"/><path d="M1108.65 1406.95 L1111.6 1404.7 L1114.55 1406.95 M1108.65 1412.3 L1111.6 1414.55 L1114.55 1412.3" fill="none" stroke="#fff" stroke-width="1.8" stroke-linecap="round" stroke-linejoin="round"/></svg>
<div id="t100" class="t" style="top:1395.00px;height:30px;line-height:30px;font-size:17.7px;color:#262626;letter-spacing:0.688px;white-space:pre;left:757.50px;">All Metadata</div>
<svg style="left:741px;top:1437px" width="24" height="24" viewBox="741 1437 24 24"><rect x="743.3" y="1439.4" width="19.6" height="19.6" rx="4.7" fill="#1a82fb"/><path d="M747.6 1449.9 L751.6 1454.5 L758.2 1444.4" fill="none" stroke="#fff" stroke-width="2.2" stroke-linecap="round" stroke-linejoin="round"/></svg>
<div id="t101" class="t" style="top:1434.00px;height:30px;line-height:30px;font-size:17.7px;color:#262626;letter-spacing:0.322px;white-space:pre;left:769.20px;">Remove Person Info</div>
<svg style="left:952px;top:1437px" width="24" height="24" viewBox="952 1437 24 24"><rect x="954" y="1439.9" width="19.6" height="19.5" rx="5" fill="rgba(0,0,0,0.05)"/><rect x="954.45" y="1439.85" width="18.7" height="18.7" rx="4.6" fill="url(#cbg)" stroke="#c6c6c6" stroke-width="0.9"/></svg>
<div id="t102" class="t" style="top:1434.00px;height:30px;line-height:30px;font-size:17.7px;color:#262626;letter-spacing:0.480px;white-space:pre;left:979.70px;">Remove Location Info</div>
<svg style="left:741px;top:1474px" width="24" height="24" viewBox="741 1474 24 24"><rect x="743.3" y="1476.5" width="19.6" height="19.5" rx="5" fill="rgba(0,0,0,0.05)"/><rect x="743.75" y="1476.45" width="18.7" height="18.7" rx="4.6" fill="url(#cbg)" stroke="#c6c6c6" stroke-width="0.9"/></svg>
<div id="t103" class="t" style="top:1471.00px;height:30px;line-height:30px;font-size:17.7px;color:#262626;letter-spacing:0.578px;white-space:pre;left:769.20px;">Write Keywords as Lightroom Hierarchy</div>
<svg style="left:553px;top:1530px" width="1195" height="48" viewBox="553 1530 1195 48"><rect x="555" y="1533.25" width="1190.8" height="2.05" fill="#9b9b9b"/><rect x="559.0" y="1539.4" width="1181.8" height="17.1" fill="#f9f9f9"/><rect x="559.0" y="1556.5" width="1181.8" height="18.2" fill="#efefef"/><rect x="559.02" y="1539.42" width="1181.76" height="35.26" fill="none" stroke="#929292" stroke-width="1.44"/><path d="M568 1549.8 L585.8 1549.8 L576.9 1564.5 Z" fill="#7d7d80"/></svg>
<div id="t104" class="t" style="top:1541.00px;height:30px;line-height:30px;font-size:17.9px;color:#1b1b1b;letter-spacing:0.705px;white-space:pre;font-weight:700;left:595.80px;">Watermarking</div>
<svg style="left:590px;top:1592px" width="24" height="25" viewBox="590 1592 24 25"><rect x="592.1" y="1595.4" width="19.6" height="19.5" rx="5" fill="rgba(0,0,0,0.05)"/><rect x="592.55" y="1595.35" width="18.7" height="18.7" rx="4.6" fill="url(#cbg)" stroke="#c6c6c6" stroke-width="0.9"/></svg>
<div id="t105" class="t" style="top:1590.00px;height:30px;line-height:30px;font-size:17.7px;color:#262626;letter-spacing:0.730px;white-space:pre;left:617.80px;">Watermark:</div>
<svg style="left:746px;top:1591px" width="369" height="32" viewBox="746 1591 369 32"><rect x="748" y="1593.6" width="364.2" height="26.4" rx="6" fill="#ececec"/><rect x="748.4" y="1593.4" width="363.4" height="25.7" rx="5.6" fill="#fff" stroke="#f1f1f1" stroke-width="0.8"/><path d="M1096.35 1603.8 L1099.3 1601.55 L1102.25 1603.8 M1096.35 1609.15 L1099.3 1611.4 L1102.25 1609.15" fill="none" stroke="#bdbdbd" stroke-width="1.8" stroke-linecap="round" stroke-linejoin="round"/></svg>
<div id="t106" class="t" style="top:1591.00px;height:30px;line-height:30px;font-size:17.7px;color:#c2c2c2;letter-spacing:0.659px;white-space:pre;left:757.50px;">Simple Copyright Watermark</div>
<svg style="left:553px;top:1636px" width="1195" height="48" viewBox="553 1636 1195 48"><rect x="555" y="1639.25" width="1190.8" height="2.05" fill="#9b9b9b"/><rect x="559.0" y="1645.4" width="1181.8" height="17.1" fill="#f9f9f9"/><rect x="559.0" y="1662.5" width="1181.8" height="18.2" fill="#efefef"/><rect x="559.02" y="1645.42" width="1181.76" height="35.26" fill="none" stroke="#929292" stroke-width="1.44"/><path d="M568 1655.8 L585.8 1655.8 L576.9 1670.5 Z" fill="#7d7d80"/></svg>
<div id="t107" class="t" style="top:1647.00px;height:30px;line-height:30px;font-size:17.9px;color:#1b1b1b;letter-spacing:0.487px;white-space:pre;font-weight:700;left:595.80px;">Post-Processing</div>
<div id="t108" class="t" style="top:1697.00px;height:30px;line-height:30px;font-size:17.7px;color:#262626;letter-spacing:0.716px;white-space:pre;left:630.80px;">After Export:</div>
<svg style="left:746px;top:1696px" width="961" height="33" viewBox="746 1696 961 33"><rect x="747.8" y="1699" width="956.6" height="27.5" rx="6.3" fill="rgba(0,0,0,0.045)"/><rect x="748" y="1699.3" width="956.2" height="26.7" rx="6" fill="#d4d4d4"/><rect x="748.4" y="1699.1" width="955.4" height="25.9" rx="5.6" fill="#fff" stroke="#e7e7e7" stroke-width="0.8"/><rect x="1680.8" y="1702.3" width="19.6" height="19.6" rx="5" fill="#1a82fb"/><path d="M1687.65 1709.35 L1690.6 1707.1 L1693.55 1709.35 M1687.65 1714.7 L1690.6 1716.95 L1693.55 1714.7" fill="none" stroke="#fff" stroke-width="1.8" stroke-linecap="round" stroke-linejoin="round"/></svg>
<div id="t109" class="t" style="top:1697.00px;height:30px;line-height:30px;font-size:17.7px;color:#262626;letter-spacing:0.760px;white-space:pre;left:757.50px;">Do nothing</div>
<div id="t110" class="t" style="top:1745.00px;height:30px;line-height:30px;font-size:17.7px;color:#262626;letter-spacing:0.695px;white-space:pre;left:638.60px;">Application:</div>
<div id="t111" class="t" style="top:1745.00px;height:30px;line-height:30px;font-size:17.7px;color:#c2c2c2;letter-spacing:0.675px;white-space:pre;left:746.20px;">/Applications/ImageOptim.app</div>
<svg style="left:1562px;top:1751px" width="18" height="13" viewBox="1562 1751 18 13"><path d="M1564.8 1752.7 L1577.2 1752.7 L1571 1759.6 Z" fill="#9a9a9c"/></svg>
<svg style="left:1584px;top:1744px" width="118" height="32" viewBox="1584 1744 118 32"><rect x="1586.2" y="1747.2" width="113.3" height="25.9" rx="6" fill="#ececec"/><rect x="1586.6" y="1747" width="112.5" height="25.2" rx="5.6" fill="#fff" stroke="#f1f1f1" stroke-width="0.8"/></svg>
<div id="t112" class="t" style="top:1745.00px;height:30px;line-height:30px;font-size:17.7px;color:#c2c2c2;letter-spacing:0.560px;white-space:pre;left:1602.40px;">Choose...</div>
<svg style="left:0;top:0" width="1807" height="2048" viewBox="0 0 1807 2048"><path d="M850.7 1273.0 L526.8 1423.1 L519.5 1407.3 L483.6 1447.6 L537.6 1446.3 L530.2 1430.4 L854.1 1280.2 Z" fill="#ea4d3d"/></svg>
<div style="left:1803.60px;top:0.00px;width:3.40px;height:2048.00px;background:linear-gradient(180deg,#1b1b1b 0px,#1b1b1b 79px,#5a5b5f 79px,#5a5b5f 121px,#1b1b1b 121px,#1b1b1b 122.5px,#6a6a6e 122.5px,#6a6a6e 130px,#1b1b1b 130px,#1b1b1b 132.5px,#3a3b3c 132.5px,#3a3b3c 173px,#1b1b1b 173px,#1b1b1b 175.4px,#8c8c8e 175.4px,#8c8c8e 232px,#6b6b73 232px,#6b6b73 335.6px,#e8e8e8 335.6px,#e8e8e8 337.5px,#272727 337.5px,#272727 656px,#343434 656px,#343434 676px,#e8e8e8 676px,#e8e8e8 678.5px,#6b6b73 678.5px,#6b6b73 780.5px,#858587 780.5px,#858587 819px,#222222 819px,#222222 820.5px,#9a9a9c 820.5px,#9a9a9c 881px,#6b6b73 881px,#6b6b73 983.5px,#2a64b8 983.5px,#2a64b8 1143px,#7f8896 1143px,#7f8896 1199px,#a2a2a2 1199px,#a2a2a2 1300px,#e8e8e8 1300px,#e8e8e8 1302px,#1b1b1b 1302px,#1b1b1b 1323.2px,#e8e8e8 1323.2px,#e8e8e8 1325.5px,#6b6b73 1325.5px,#6b6b73 1427px,#858587 1427px,#858587 1466.7px,#222222 1466.7px,#222222 1468.5px,#9a9a9c 1468.5px,#9a9a9c 1527px,#6b6b73 1527px,#6b6b73 1629.4px,#e8e8e8 1629.4px,#e8e8e8 1631px,#4a4a4a 1631px,#4a4a4a 1686px,#1e1e1e 1686px,#1e1e1e 1948px,#555555 1948px,#555555 1949.5px,#272727 1949.5px,#272727 1968.7px,#e8e8e8 1968.7px,#e8e8e8 1971px,#6b6b73 1971px,#6b6b73 2048px);"></div>
</div></body></html>
